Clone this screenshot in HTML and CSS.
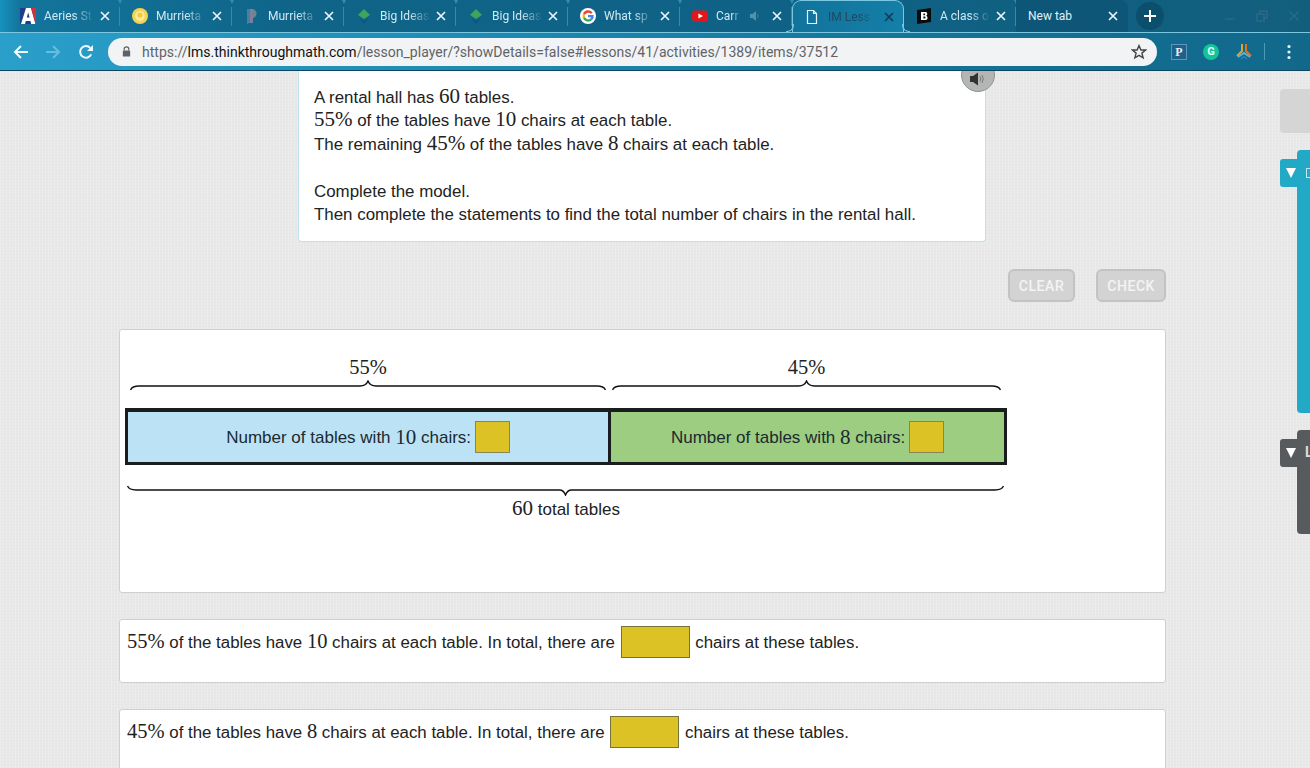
FILE: index.html
```html
<!DOCTYPE html>
<html lang="en">
<head>
<meta charset="utf-8">
<title>IM Lesson</title>
<link rel="stylesheet" href="styles.css">
</head>
<body>
<header class="chrome">
  <div class="tabstrip">
    <div class="tab">
      <svg class="fav" viewBox="0 0 16 16"><rect x="0" y="0" width="16" height="16" fill="#1b3f8f"/><path d="M1 16L6 0H11L15.500 16H11.200L10.500 13H5.800L5 16ZM6.800 9.500H9.600L8.200 4.500Z" fill="#fff"/><path d="M15.500 16L11 0H16V16Z" fill="#d6303a"/></svg>
      <span class="title">Aeries St</span><svg class="x" viewBox="0 0 10 10"><path d="M1 1L9 9M9 1L1 9"/></svg>
    </div>
    <div class="tab">
      <svg class="fav" viewBox="0 0 16 16"><circle cx="8" cy="8" r="8" fill="#f4d34f"/><circle cx="8" cy="8" r="5" fill="#fbe9a0"/><circle cx="8" cy="7" r="2.600" fill="#f7c93a"/></svg>
      <span class="title">Murrieta</span><svg class="x" viewBox="0 0 10 10"><path d="M1 1L9 9M9 1L1 9"/></svg>
    </div>
    <div class="tab">
      <svg class="fav" viewBox="0 0 16 16"><path d="M3 1H8V15H5L3 16Z" fill="#4b7f9a"/><path d="M8 1C14 1 14 10 8 10Z" fill="#6d8a76"/><path d="M6 1H9V15H6Z" fill="#7b7fa6"/></svg>
      <span class="title">Murrieta</span><svg class="x" viewBox="0 0 10 10"><path d="M1 1L9 9M9 1L1 9"/></svg>
    </div>
    <div class="tab">
      <svg class="fav" viewBox="0 0 16 16"><path d="M8 1L14 7L8 11L2 7Z" fill="#3fa45b"/><path d="M2 9L8 13L14 9L8 16Z" fill="#16518a"/></svg>
      <span class="title">Big Ideas</span><svg class="x" viewBox="0 0 10 10"><path d="M1 1L9 9M9 1L1 9"/></svg>
    </div>
    <div class="tab">
      <svg class="fav" viewBox="0 0 16 16"><path d="M8 1L14 7L8 11L2 7Z" fill="#3fa45b"/><path d="M2 9L8 13L14 9L8 16Z" fill="#16518a"/></svg>
      <span class="title">Big Ideas</span><svg class="x" viewBox="0 0 10 10"><path d="M1 1L9 9M9 1L1 9"/></svg>
    </div>
    <div class="tab">
      <svg class="fav" viewBox="0 0 16 16"><circle cx="8" cy="8" r="8" fill="#fff"/><path d="M12.600 4.300A5.800 5.800 0 0 0 3 5.400L5 6.900A3.400 3.400 0 0 1 10.900 6Z" fill="#ea4335"/><path d="M3 5.400A5.800 5.800 0 0 0 3 10.600L5 9.100A3.400 3.400 0 0 1 5 6.900Z" fill="#fbbc05"/><path d="M3 10.600A5.800 5.800 0 0 0 12 12.200L10.100 10.700A3.400 3.400 0 0 1 5 9.100Z" fill="#34a853"/><path d="M12 12.200A5.800 5.800 0 0 0 13.700 7H8V9.200H11.200A3 3 0 0 1 10.100 10.700Z" fill="#4285f4"/></svg>
      <span class="title">What sp</span><svg class="x" viewBox="0 0 10 10"><path d="M1 1L9 9M9 1L1 9"/></svg>
    </div>
    <div class="tab">
      <svg class="fav" viewBox="0 0 16 16"><rect x="0" y="2.500" width="16" height="11" rx="3.500" fill="#e3161b"/><path d="M6.400 5.500L11 8L6.400 10.500Z" fill="#fff"/></svg>
      <span class="title short">Carr</span>
      <svg class="sound" viewBox="0 0 12 12"><path d="M1 4H3.500L7 1V11L3.500 8H1Z" fill="#4f93ad"/><path d="M8.500 4Q10 6 8.500 8" fill="none" stroke="#3f829c"/></svg>
      <svg class="x" viewBox="0 0 10 10"><path d="M1 1L9 9M9 1L1 9"/></svg>
    </div>
    <div class="tab active">
      <svg class="fav" viewBox="0 0 16 16"><path d="M3.500 1.500H9.500L12.500 4.500V14.500H3.500ZM9.500 1.500V4.500H12.500" fill="none" stroke="#e6f5fb" stroke-width="1.200"/></svg>
      <span class="title">IM Less</span><svg class="x" viewBox="0 0 10 10"><path d="M1 1L9 9M9 1L1 9"/></svg>
    </div>
    <div class="tab">
      <svg class="fav" viewBox="0 0 16 16"><path d="M1 2L15 0V14L1 16Z" fill="#0b0b0b"/><path d="M5 4H9.500Q11.300 4 11.300 6Q11.300 7.400 10 7.800Q11.600 8.200 11.600 10Q11.600 12 9.500 12H5ZM7.400 5.600V7.200H8.600Q9.200 7.200 9.200 6.400T8.600 5.600ZM7.400 8.600V10.400H8.800Q9.500 10.400 9.500 9.500T8.800 8.600Z" fill="#fff"/></svg>
      <span class="title">A class o</span><svg class="x" viewBox="0 0 10 10"><path d="M1 1L9 9M9 1L1 9"/></svg>
    </div>
    <div class="tab last">
      <span class="title wide">New tab</span><svg class="x" viewBox="0 0 10 10"><path d="M1 1L9 9M9 1L1 9"/></svg>
    </div>
    <div class="newtab">
      <svg viewBox="0 0 14 14"><path d="M7 1V13M1 7H13" stroke="#fff" stroke-width="2"/></svg>
    </div>
    <div class="winctl">
      <svg viewBox="0 0 12 12"><path d="M1 9H11" stroke="#2c6b85" stroke-width="1.400"/></svg>
      <svg viewBox="0 0 12 12"><path d="M1 4H8V11H1ZM4 4V1H11V8H8" fill="none" stroke="#2c6b85" stroke-width="1.400"/></svg>
      <svg viewBox="0 0 12 12"><path d="M1.500 1.500L10.500 10.500M10.500 1.500L1.500 10.500" stroke="#2c6b85" stroke-width="1.400"/></svg>
    </div>
  </div>
  <div class="toolbar">
    <svg class="nav back" viewBox="0 0 16 16"><path d="M15 8H2M8 2L2 8L8 14" fill="none" stroke="#f1fbff" stroke-width="2"/></svg>
    <svg class="nav fwd" viewBox="0 0 16 16"><path d="M1 8H14M8 2L14 8L8 14" fill="none" stroke="#66bede" stroke-width="2"/></svg>
    <svg class="nav reload" viewBox="0 0 16 16"><path d="M13.200 10.400A5.800 5.800 0 1 1 12.200 3.900" fill="none" stroke="#f1fbff" stroke-width="2"/><path d="M15 1V7H9Z" fill="#f1fbff"/></svg>
    <div class="omnibox">
      <svg class="lock" viewBox="0 0 12 12"><path d="M3.500 5V3.500A2.500 2.500 0 0 1 8.500 3.500V5" fill="none" stroke="#5f6368" stroke-width="1.300"/><rect x="2" y="5" width="8" height="6.500" rx="1" fill="#5f6368"/></svg>
      <span class="url"><span class="dim">https://</span>lms.thinkthroughmath.com<span class="dim">/lesson_player/?showDetails=false#lessons/41/activities/1389/items/37512</span></span>
      <svg class="star" viewBox="0 0 16 16"><path d="M8 1.600L9.900 6H14.600L10.900 9.100L12.100 13.800L8 11.300L3.900 13.800L5.100 9.100L1.400 6H6.100Z" fill="none" stroke="#444" stroke-width="1.400"/></svg>
    </div>
    <div class="exts">
      <span class="ext-p">P</span>
      <span class="ext-g">G</span>
      <svg class="ext-k" viewBox="0 0 18 18"><path d="M7 1V8L2 13" fill="none" stroke="#e0a32e" stroke-width="2"/><path d="M11 1V8L16 13" fill="none" stroke="#d9762c" stroke-width="2"/><path d="M3 14L9 10L15 14" fill="none" stroke="#5fb3c9" stroke-width="2"/><path d="M6 16L9 13.500L12 16" fill="none" stroke="#2a86b5" stroke-width="1.600"/></svg>
      <span class="sep"></span>
      <svg class="dots" viewBox="0 0 4 16"><circle cx="2" cy="2.500" r="1.600" fill="#e9f7fc"/><circle cx="2" cy="8" r="1.600" fill="#e9f7fc"/><circle cx="2" cy="13.500" r="1.600" fill="#e9f7fc"/></svg>
    </div>
  </div>
</header>

<main class="page">
  <section class="prompt">
    <p>A rental hall has <span class="m">60</span> tables.</p>
    <p><span class="m">55%</span> of the tables have <span class="m">10</span> chairs at each table.</p>
    <p>The remaining <span class="m">45%</span> of the tables have <span class="m">8</span> chairs at each table.</p>
    <p class="blank">&nbsp;</p>
    <p>Complete the model.</p>
    <p>Then complete the statements to find the total number of chairs in the rental hall.</p>
  </section>

  <div class="actions">
    <button class="btn">CLEAR</button>
    <button class="btn">CHECK</button>
  </div>

  <section class="card model">
    <div class="tops">
      <div class="top top-a">
        <span class="m">55%</span>
        <svg class="brace" viewBox="0 0 476 11" preserveAspectRatio="none"><path d="M0.500 10Q2 6 9 6H230Q236 6 238 1Q240 6 246 6H467Q474 6 475.500 10" fill="none" stroke="#111" stroke-width="1.400"/></svg>
      </div>
      <div class="top top-b">
        <span class="m">45%</span>
        <svg class="brace" viewBox="0 0 389 11" preserveAspectRatio="none"><path d="M0.500 10Q2 6 9 6H186.500Q192.500 6 194.500 1Q196.500 6 202.500 6H380Q387 6 388.500 10" fill="none" stroke="#111" stroke-width="1.400"/></svg>
      </div>
    </div>
    <div class="bar">
      <div class="cell cell-a">Number of tables with <span class="m">10</span> chairs: <span class="box"></span></div>
      <div class="cell cell-b">Number of tables with <span class="m">8</span> chairs: <span class="box"></span></div>
    </div>
    <svg class="brace-total" viewBox="0 0 877 11"><path d="M0.500 1Q2 5 9 5H432.500Q436.500 5 438.500 10Q440.500 5 444.500 5H868Q875 5 876.500 1" fill="none" stroke="#111" stroke-width="1.400"/></svg>
    <div class="total"><span class="m">60</span> total tables</div>
  </section>

  <section class="card stmt">
    <span class="m">55%</span> of the tables have <span class="m">10</span> chairs at each table. In total, there are <span class="box wide"></span> chairs at these tables.
  </section>
  <section class="card stmt">
    <span class="m">45%</span> of the tables have <span class="m">8</span> chairs at each table. In total, there are <span class="box wide"></span> chairs at these tables.
  </section>

  <button class="speaker" aria-label="Read aloud">
    <svg viewBox="0 0 18 14"><path d="M1 4H4L9 0.500V13.500L4 10H1Z" fill="#333"/><path d="M11 4.500Q12.500 7 11 9.500M13 3Q15.500 7 13 11" fill="none" stroke="#777" stroke-width="1"/></svg>
  </button>
  <div class="side-gray"></div>
  <div class="drawer teal"><span class="pull"><i class="tri"></i></span><div class="panel"><span class="glyph"></span></div></div>
  <div class="drawer dark"><span class="pull"><i class="tri"></i></span><div class="panel"><span class="letter">L</span></div></div>
</main>
</body>
</html>
```

FILE: styles.css
```css
* { box-sizing: border-box; }
html, body { margin: 0; padding: 0; height: 100%; overflow: hidden; }
body { width: 1310px; height: 768px; font-family: "Liberation Sans", Arial, sans-serif; color: #222; background: #e8e8e8; }

/* browser chrome */
.chrome { height: 71px; font-family: Roboto, sans-serif; }
.tabstrip { height: 33px; display: flex; padding-left: 8px; align-items: stretch; position: relative;
  background: linear-gradient(90deg, #1592bd 0, #13749c 20px, #0f6488 300px, #0f6286 800px, #125e7d 100%);
  border-bottom: 1px solid #7cc7e0; }
.tab { width: 112px; height: 32px; display: flex; align-items: center; padding-left: 12px; position: relative; color: #cfe9f3; font-size: 12px; }
.tab::after { content: ""; position: absolute; right: 0; top: 7px; height: 19px; width: 1px; background: #3d88a6; }
.tab::before { content: ""; position: absolute; right: -2px; top: 0; width: 0; height: 0; border-left: 2.500px solid transparent; border-right: 2.500px solid transparent; border-top: 4px solid #2f8fb0; }
.tab.last::after, .tab.last::before { display: none; }
.tab.active { background: linear-gradient(90deg, #12739b, #147fa8); border: 1px solid #7cc7e0; border-bottom: 0; border-radius: 9px 9px 0 0; color: #1d4a62; padding-left: 11px; z-index: 1; }
.tab.active::before, .tab.active::after { content: ""; position: absolute; top: auto; bottom: 0; width: 7px; height: 7px; background: none; border: 0 solid #7cc7e0; }
.tab.active::before { left: -7px; right: auto; border-width: 0 1px 1px 0; border-bottom-right-radius: 7px; }
.tab.active::after { right: -7px; border-width: 0 0 1px 1px; border-bottom-left-radius: 7px; }
.tab.last { background: #0e5677; border-radius: 0 8px 0 0; color: #e0f1f7; }
.fav { width: 16px; height: 16px; flex: none; margin-right: 8px; }
.title { width: 53px; overflow: hidden; white-space: nowrap; flex: none;
  -webkit-mask-image: linear-gradient(90deg, #000 55%, rgba(0,0,0,.12) 90%); mask-image: linear-gradient(90deg, #000 55%, rgba(0,0,0,.12) 90%); }
.title.short { width: 27px; }
.title.wide { width: 77px; -webkit-mask-image: none; mask-image: none; }
.sound { width: 12px; height: 12px; margin-left: 6px; margin-right: 8px; flex: none; }
.x { width: 16px; height: 10px; flex: none; fill: none; stroke: #eaf7fb; stroke-width: 1.700; }
.active .x { stroke: #123d52; }
.newtab { width: 28px; height: 28px; margin: 2px 0 0 8px; border-radius: 50%; background: #0b4f6c; display: flex; align-items: center; justify-content: center; }
.newtab svg { width: 14px; height: 14px; }
.winctl { display: flex; gap: 20px; margin-left: auto; padding: 10px 10px 0 0; }
.winctl svg { width: 12px; height: 12px; }

.toolbar { height: 38px; display: flex; align-items: center; padding-left: 13px; position: relative;
  background: linear-gradient(90deg, #2a9fca 0, #1f8eb8 400px, #157499 900px, #11688b 100%);
  border-bottom: 1px solid #0c465f; }
.nav { width: 16px; height: 16px; flex: none; }
.fwd { margin-left: 16px; }
.reload { margin-left: 17px; }
.omnibox { width: 1049px; height: 28px; margin-left: 14px; border-radius: 14px; background: #f1f3f4; display: flex; align-items: center; padding: 0 10px 0 13px; }
.lock { width: 11px; height: 11px; flex: none; }
.url { margin-left: 10px; font-size: 14px; color: #111; white-space: nowrap; flex: 1; letter-spacing: .015px; }
.dim { color: #5f6368; }
.star { width: 16px; height: 16px; flex: none; }
.exts { display: flex; align-items: center; margin-left: 14px; }
.ext-p { width: 16px; height: 16px; border: 1px solid #5f95bd; background: #1f6288; color: #e8f0f8; font: 700 12px/14px "Liberation Serif", serif; text-align: center; }
.ext-g { width: 16px; height: 16px; margin-left: 16px; border-radius: 50%; background: #15c39a; color: #e8fff8; font: 700 11px/16px Roboto, sans-serif; text-align: center; }
.ext-k { width: 18px; height: 18px; margin-left: 16px; }
.sep { width: 1px; height: 17px; background: #4f99b5; margin-left: 11px; }
.dots { width: 4px; height: 16px; margin-left: 22px; }

/* page */
.page { position: relative; height: 697px; overflow: hidden; padding-left: 119px; width: 1310px;
  background-color: #e8e8e8;
  background-image: repeating-linear-gradient(90deg, rgba(255,255,255,.2) 0 1px, transparent 1px 3px), repeating-linear-gradient(0deg, rgba(0,0,0,.012) 0 1px, transparent 1px 3px); }
.m { font-family: "Liberation Serif", "DejaVu Serif", serif; font-size: 21px; line-height: 1; }
.prompt { width: 688px; margin-left: 179px; padding: 14.500px 15px 14.500px; background: #fff; border: 1px solid #bfe2ea; border-top: 0; border-radius: 0 0 4px 4px; font-size: 16.900px; line-height: 23.500px; color: #222; }
.prompt p { margin: 0; }
.actions { width: 1047px; display: flex; justify-content: flex-end; gap: 21px; margin-top: 27px; }
.btn { height: 33px; padding: 0 9px; border: 2px solid #c3c3c3; border-radius: 6px; background: #d3d3d3; color: #f4f4f4; font: 500 14px Roboto, sans-serif; letter-spacing: .55px; }

.card { width: 1047px; background: #fff; border: 1px solid #cfcfcf; border-radius: 3px; }
.model { height: 264px; margin-top: 27px; padding: 0 0 0 5px; display: flex; flex-direction: column; align-items: flex-start; }
.tops { display: flex; padding-left: 5px; gap: 6px; margin-top: 24px; }
.top { display: flex; flex-direction: column; align-items: center; line-height: 26px; color: #222; }
.top .m { line-height: 26px; font-size: 20.500px; }
.top-a { width: 476px; }
.top-b { width: 389px; }
.brace { display: block; width: 100%; height: 11px; }
.bar { width: 882px; height: 57px; margin-top: 17px; display: flex; border: solid #1a1d1f; border-width: 4px 3px 3px; font-size: 17px; color: #1b2a30; }
.cell { height: 100%; display: flex; align-items: center; justify-content: center; white-space: pre; padding-top: 1px; }
.cell-a { width: 483px; background: #bbe3f5; border-right: 3px solid #1a1d1f; }
.cell-b { flex: 1; background: #9ccd81; }
.box { display: inline-block; width: 35px; height: 32px; margin: -1px 0 0 -1px; background: #dcc224; border: 1px solid #8a8558; }
.box.wide { width: 69px; height: 32px; vertical-align: middle; margin: -4px 1px 0 1px; border: 1px solid #77733f; }
.brace-total { display: block; width: 877px; height: 11px; margin: 20px 0 0 2px; }
.total { width: 882px; text-align: center; font-size: 17px; line-height: 24px; margin-top: 2px; color: #222; }
.stmt { height: 64px; margin-top: 26px; padding: 10px 0 0 7px; font-size: 16.850px; line-height: 26px; color: #222; }
.stmt .m { font-size: 20.500px; }

/* overlays */
.speaker { position: absolute; left: 961px; top: -13px; width: 34px; height: 34px; padding: 0; border-radius: 50%; background: #b4b6b6; border: 1px solid #8f9494; display: flex; align-items: center; justify-content: center; }
.speaker svg { width: 18px; height: 14px; margin-top: 8px; }
.side-gray { position: absolute; left: 1280px; top: 18px; width: 30px; height: 44px; background: #d5d5d5; border-radius: 4px 0 0 4px; }
.drawer { position: absolute; left: 1280px; width: 30px; display: flex; align-items: flex-start; }
.teal { top: 79px; height: 263px; --c: #21a9c6; }
.dark { top: 359px; height: 104px; --c: #585b5d; }
.pull { width: 17px; height: 28px; margin-top: 9px; background: var(--c); border-radius: 3px 0 0 3px; display: flex; align-items: center; justify-content: center; padding-left: 5px; flex: none; }
.tri { width: 0; height: 0; border-left: 5px solid transparent; border-right: 5px solid transparent; border-top: 10px solid #fff; }
.panel { flex: 1; height: 100%; background: var(--c); border-radius: 4px 0 0 4px; position: relative; }
.glyph { position: absolute; left: 9px; top: 18px; width: 8px; height: 10px; border: 1px solid #bfeaf3; }
.letter { position: absolute; left: 8px; top: 14px; color: #ddd; font: 700 14px Roboto, sans-serif; }
```
